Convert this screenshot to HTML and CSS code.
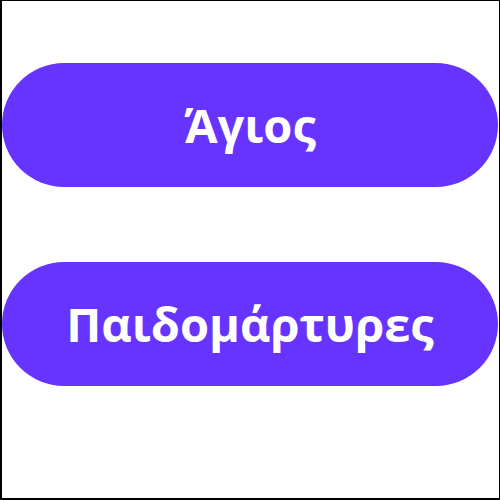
FILE: index.html
```html
<!DOCTYPE html>
<html lang="el">
<head>
<meta charset="utf-8">
<link rel="stylesheet" href="styles.css">
</head>
<body>
<div class="frame">
  <button class="pill">Άγιος</button>
  <button class="pill">Παιδομάρτυρες</button>
</div>
</body>
</html>
```
FILE: styles.css
```css
html, body {
  margin: 0;
  padding: 0;
  background: #fff;
}
.frame {
  box-sizing: border-box;
  width: 500px;
  height: 500px;
  border: 1px solid #000;
  border-left-width: 2px;
  border-bottom-width: 2px;
  display: flex;
  flex-direction: column;
  gap: 75px;
  padding: 62px 1px 0 0;
}
.pill {
  height: 124px;
  width: 100%;
  border: none;
  border-radius: 62px;
  background: #6633ff;
  color: #fff;
  font-family: "Open Sans", "Noto Sans", sans-serif;
  font-weight: 700;
  font-size: 47px;
  padding: 0;
  display: flex;
  align-items: center;
  justify-content: center;
}
```
